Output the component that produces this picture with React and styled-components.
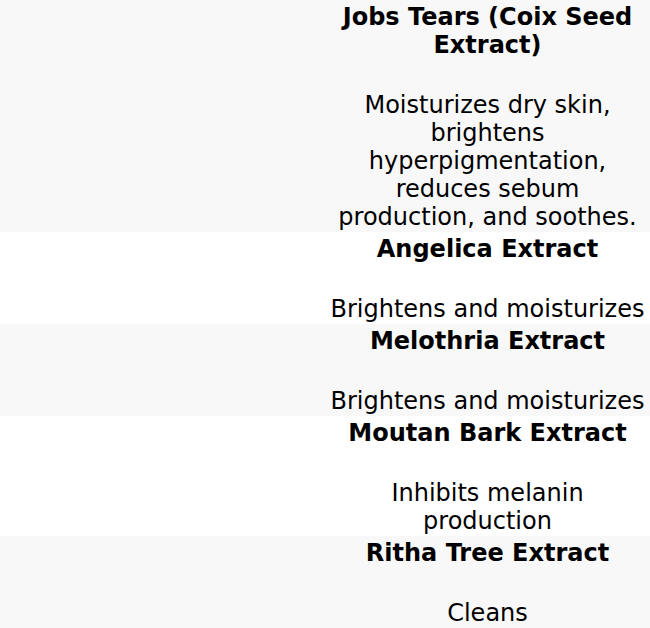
import React from "react";
import styled, { createGlobalStyle } from "styled-components";

const GlobalStyle = createGlobalStyle`
  body {
    margin: 0;
    background: #fff;
    font-family: "DejaVu Sans", sans-serif;
    color: #000;
  }
`;

const Table = styled.div`
  width: 650px;
  display: flex;
  flex-direction: column;
`;

const Row = styled.div`
  display: grid;
  grid-template-columns: 325px 325px;
  background: ${props => (props.shaded ? "#f8f8f8" : "#fff")};
`;

const Cell = styled.div`
  padding: 3px 2px 1px;
  text-align: center;
  font-size: 24px;
  line-height: 28px;
`;

const Name = styled.div`
  font-weight: 700;
`;

const Description = styled.div`
  margin-top: 32px;
`;

const ingredients = [
  {
    name: "Jobs Tears (Coix Seed Extract)",
    text: "Moisturizes dry skin, brightens hyperpigmentation, reduces sebum production, and soothes."
  },
  { name: "Angelica Extract", text: "Brightens and moisturizes" },
  { name: "Melothria Extract", text: "Brightens and moisturizes" },
  { name: "Moutan Bark Extract", text: "Inhibits melanin production" },
  { name: "Ritha Tree Extract", text: "Cleans" }
];

const App = () => (
  <>
    <GlobalStyle />
    <Table>
      {ingredients.map((item, i) => (
        <Row key={item.name} shaded={i % 2 === 0}>
          <Cell />
          <Cell>
            <Name>{item.name}</Name>
            <Description>{item.text}</Description>
          </Cell>
        </Row>
      ))}
    </Table>
  </>
);

export default App;
